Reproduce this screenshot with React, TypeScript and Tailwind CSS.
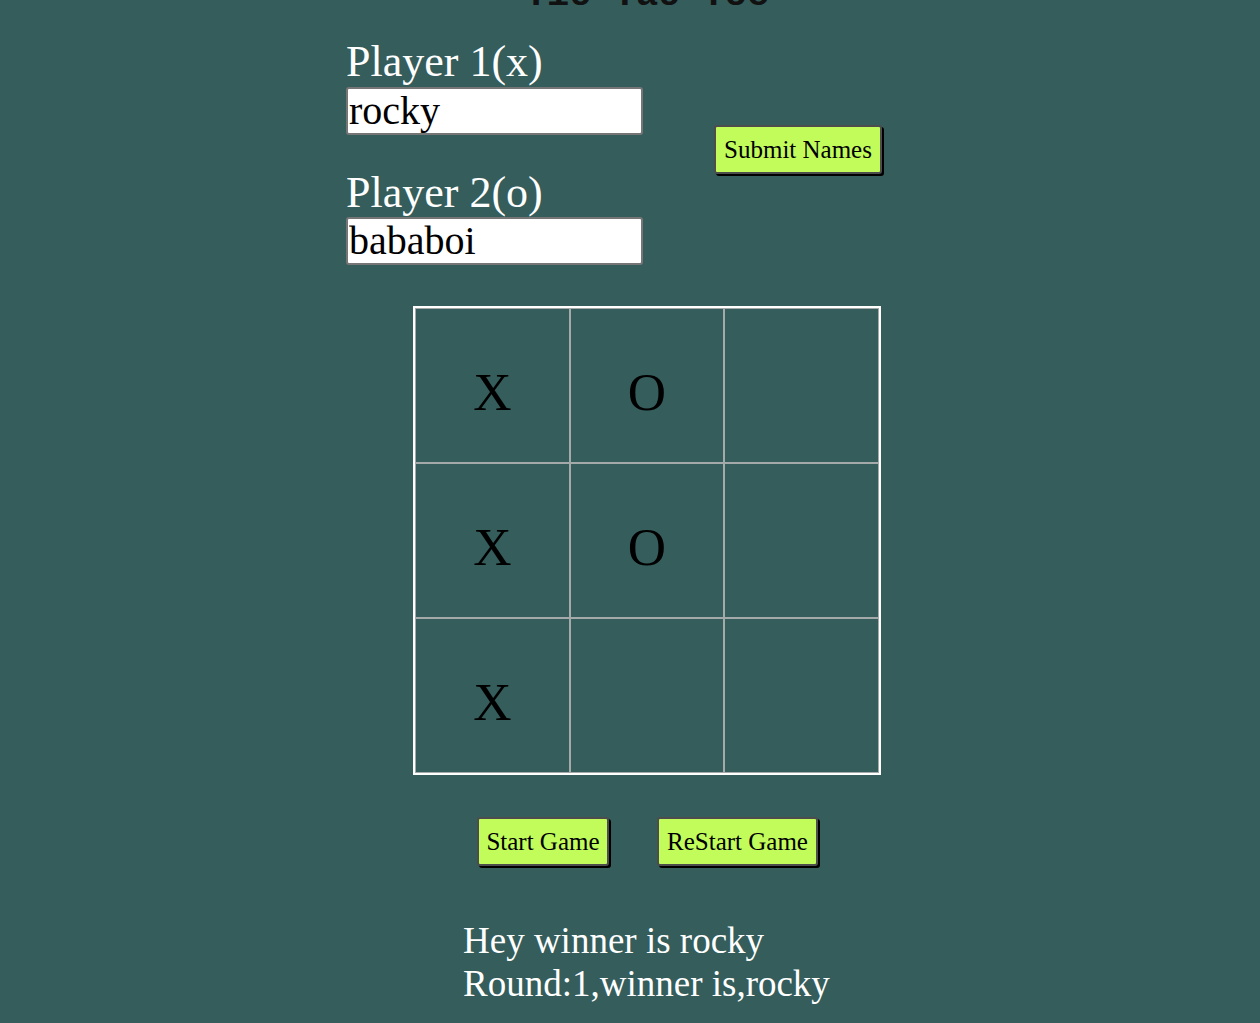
import React, { useState } from 'react';

const serif = { fontFamily: '"Liberation Serif", "Times New Roman", serif' };

const GreenButton = ({ label, className = '' }: { label: string; className?: string }) => (
  <button
    className={`h-[49px] px-[6px] bg-[#c1fc5b] text-black text-[25px] leading-none border-2 border-[#4d4d4d] rounded-[3px] shadow-[2px_2px_0_#000] ${className}`}
    style={serif}
  >
    {label}
  </button>
);

export default function App() {
  const [p1, setP1] = useState('rocky');
  const [p2, setP2] = useState('bababoi');
  const board = ['X', 'O', '', 'X', 'O', '', 'X', '', ''];

  return (
    <div className="min-h-screen w-full bg-[#345d5c] overflow-hidden text-white" style={serif}>
      {/* Title, mostly scrolled off */}
      <h1
        className="ml-[413px] w-[468px] mt-[-25px] h-[40px] text-center text-[37px] leading-[40px] font-bold text-[#111]"
        style={{ fontFamily: '"Liberation Mono", "Courier New", monospace' }}
      >
        Tic-Tac-Toe
      </h1>

      {/* Player names */}
      <div className="flex items-start ml-[346px] mt-[23px]">
        <div className="w-[297px]">
          <div className="text-[44px] leading-[47px]">Player 1(x)</div>
          <input
            value={p1}
            onChange={(e) => setP1(e.target.value)}
            className="mt-[2px] w-[297px] h-[48px] px-[1px] bg-white text-black text-[40px] border-2 border-[#767676] rounded-[3px] outline-none"
            style={serif}
          />
          <div className="mt-[34px] text-[44px] leading-[47px]">Player 2(o)</div>
          <input
            value={p2}
            onChange={(e) => setP2(e.target.value)}
            className="mt-[1px] w-[297px] h-[48px] px-[1px] bg-white text-black text-[40px] border-2 border-[#767676] rounded-[3px] outline-none"
            style={serif}
          />
        </div>
        <GreenButton label="Submit Names" className="ml-[71px] mt-[87px] w-[168px]" />
      </div>

      {/* Board */}
      <div className="ml-[413px] mt-[41px] w-[468px] h-[469px] border-2 border-white">
        <div className="w-full h-full border border-[#a4a9a9] bg-[#a4a9a9] grid grid-cols-3 grid-rows-3 gap-[2px]">
          {board.map((v, i) => (
            <div
              key={i}
              className="bg-[#345d5c] flex items-center justify-center pt-[14px] text-[53px] text-black"
            >
              {v}
            </div>
          ))}
        </div>
      </div>

      {/* Controls */}
      <div className="flex ml-[477px] mt-[42px] gap-[48px]">
        <GreenButton label="Start Game" className="w-[132px]" />
        <GreenButton label="ReStart Game" className="w-[161px]" />
      </div>

      {/* Results */}
      <div className="ml-[463px] mt-[53px] text-[37px] leading-[43px]">
        <div>Hey winner is rocky</div>
        <div>Round:1,winner is,rocky</div>
      </div>
    </div>
  );
}
